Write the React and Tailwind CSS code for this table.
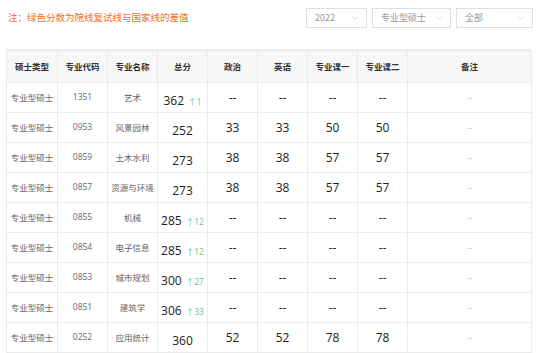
import { ChevronDown } from "lucide-react";

const ROWS = [
  ["专业型硕士", "1351", "艺术", "362", "1", "--", "--", "--", "--"],
  ["专业型硕士", "0953", "风景园林", "252", "", "33", "33", "50", "50"],
  ["专业型硕士", "0859", "土木水利", "273", "", "38", "38", "57", "57"],
  ["专业型硕士", "0857", "资源与环境", "273", "", "38", "38", "57", "57"],
  ["专业型硕士", "0855", "机械", "285", "12", "--", "--", "--", "--"],
  ["专业型硕士", "0854", "电子信息", "285", "12", "--", "--", "--", "--"],
  ["专业型硕士", "0853", "城市规划", "300", "27", "--", "--", "--", "--"],
  ["专业型硕士", "0851", "建筑学", "306", "33", "--", "--", "--", "--"],
  ["专业型硕士", "0252", "应用统计", "360", "", "52", "52", "78", "78"],
];

const HEAD = ["硕士类型", "专业代码", "专业名称", "总分", "政治", "英语", "专业课一", "专业课二", "备注"];

function Select({ label, w }) {
  return (
    <div className={`${w} h-[20px] border border-[#dcdfe6] bg-white flex items-center justify-between pl-[8px] pr-[6px] text-[9px] text-[#999]`}>
      <span>{label}</span>
      <ChevronDown size={10} strokeWidth={1.2} className="text-[#bbb]" />
    </div>
  );
}

export default function App() {
  return (
    <div className="w-[538px] h-[353px] bg-white overflow-hidden font-['Noto_Sans_CJK_SC','Noto_Sans',sans-serif]">
      <div className="flex items-center justify-between h-[34px] pl-[8px] pr-[5px] pt-[1px]">
        <div className="text-[9.5px] text-[#f26b1d]">注：绿色分数为院线复试线与国家线的差值</div>
        <div className="flex gap-[5px]">
          <Select label="2022" w="w-[61px]" />
          <Select label="专业型硕士" w="w-[79px]" />
          <Select label="全部" w="w-[77px]" />
        </div>
      </div>
      <div className="mt-[15px] ml-[6px] w-[524px] border-t border-[#eeeeee]">
        <table className="border-collapse table-fixed w-[524px]">
          <colgroup>
            <col className="w-[51px]" />
            {[0, 1, 2, 3, 4, 5, 6].map(i => <col key={i} className="w-[50px]" />)}
            <col className="w-[124px]" />
          </colgroup>
          <thead>
            <tr className="h-[32px] bg-[#f7f7f7]">
              {HEAD.map(h => (
                <th key={h} className="border border-[#ebebeb] text-[8.5px] font-bold text-[#333] p-0 whitespace-nowrap">{h}</th>
              ))}
            </tr>
          </thead>
          <tbody>
            {ROWS.map(r => (
              <tr key={r[1]} className="h-[30px]">
                <td className="border border-[#ebebeb] text-[8.5px] text-[#666] text-center p-0 whitespace-nowrap">{r[0]}</td>
                <td className="border border-[#ebebeb] text-[8.5px] text-[#666] text-center p-0 font-['Open_Sans',sans-serif]">{r[1]}</td>
                <td className="border border-[#ebebeb] text-[8.5px] text-[#666] text-center p-0 whitespace-nowrap">{r[2]}</td>
                <td className="border border-[#ebebeb] text-center p-0 whitespace-nowrap">
                  <span className="text-[12px] text-[#222] font-['Open_Sans',sans-serif]">{r[3]}</span>
                  {r[4] && (
                    <span className="ml-[4px] text-[8.5px] text-[#6cbf95]">
                      <span className="font-['Noto_Sans_CJK_SC',sans-serif]">↑</span>
                      <span className="font-['Open_Sans',sans-serif]">{r[4]}</span>
                    </span>
                  )}
                </td>
                {[r[5], r[6], r[7], r[8]].map((v, i) => (
                  <td key={i} className="border border-[#ebebeb] text-center p-0 text-[#222] text-[12px] font-['Open_Sans',sans-serif]">{v}</td>
                ))}
                <td className="border border-[#ebebeb] text-center p-0 text-[8px] text-[#bbb]">--</td>
              </tr>
            ))}
          </tbody>
        </table>
      </div>
    </div>
  );
}
